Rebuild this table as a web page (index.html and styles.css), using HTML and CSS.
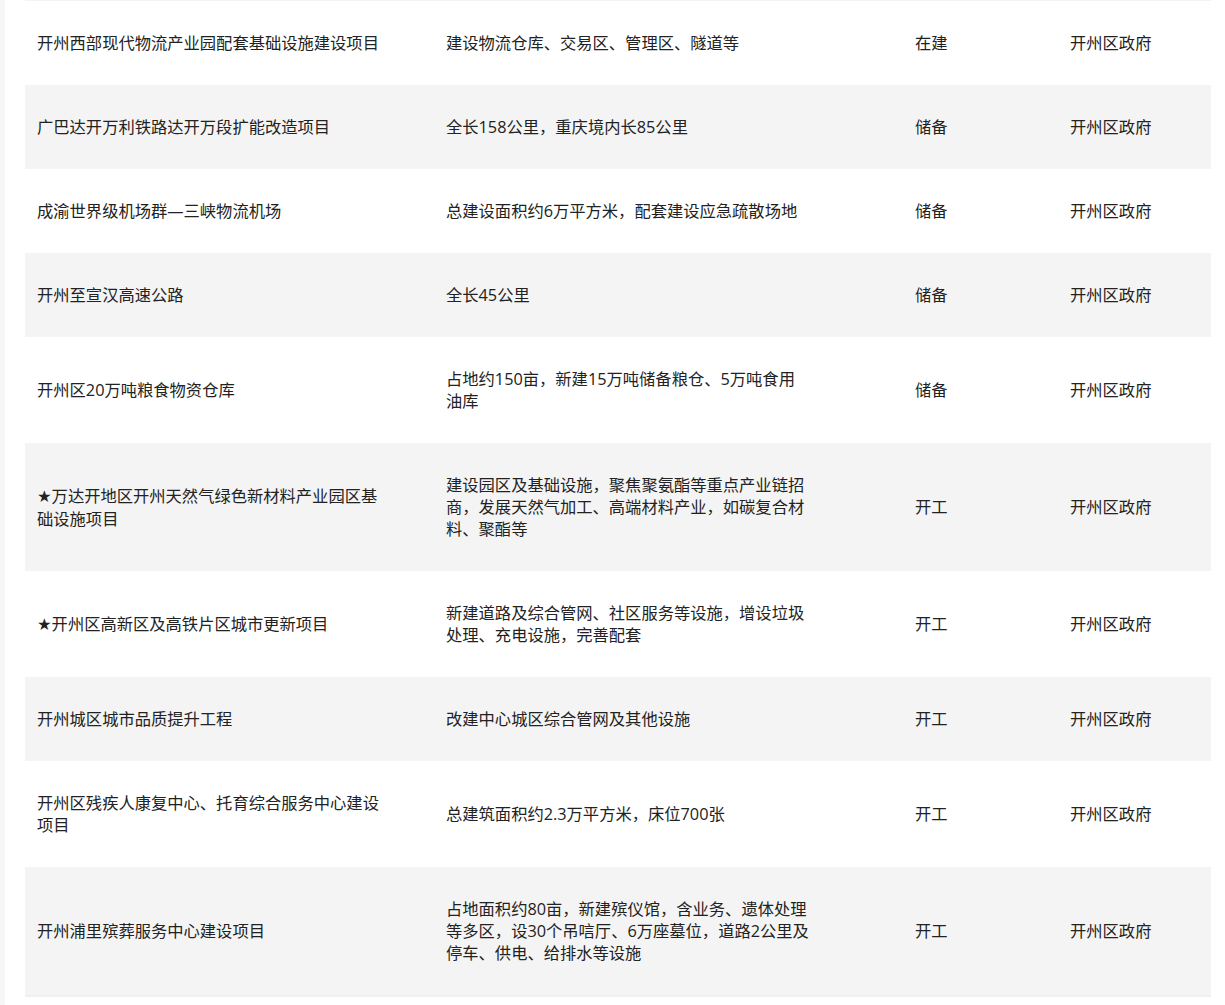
FILE: index.html
```html
<!DOCTYPE html>
<html lang="zh-CN">
<head>
<meta charset="utf-8">
<title>开州区项目</title>
<link rel="stylesheet" href="styles.css">
</head>
<body>
<div class="page">
  <table class="projects">
    <colgroup>
      <col class="c-name">
      <col class="c-desc">
      <col class="c-state">
      <col class="c-owner">
    </colgroup>
    <tbody>
      <tr>
        <td class="name">开州西部现代物流产业园配套基础设施建设项目</td>
        <td class="desc">建设物流仓库、交易区、管理区、隧道等</td>
        <td>在建</td>
        <td>开州区政府</td>
      </tr>
      <tr>
        <td class="name">广巴达开万利铁路达开万段扩能改造项目</td>
        <td class="desc">全长158公里，重庆境内长85公里</td>
        <td>储备</td>
        <td>开州区政府</td>
      </tr>
      <tr>
        <td class="name">成渝世界级机场群—三峡物流机场</td>
        <td class="desc">总建设面积约6万平方米，配套建设应急疏散场地</td>
        <td>储备</td>
        <td>开州区政府</td>
      </tr>
      <tr>
        <td class="name">开州至宣汉高速公路</td>
        <td class="desc">全长45公里</td>
        <td>储备</td>
        <td>开州区政府</td>
      </tr>
      <tr>
        <td class="name">开州区20万吨粮食物资仓库</td>
        <td class="desc">占地约150亩，新建15万吨储备粮仓、5万吨食用油库</td>
        <td>储备</td>
        <td>开州区政府</td>
      </tr>
      <tr>
        <td class="name"><span class="star">★</span>万达开地区开州天然气绿色新材料产业园区基础设施项目</td>
        <td class="desc">建设园区及基础设施，聚焦聚氨酯等重点产业链招商，发展天然气加工、高端材料产业，如碳复合材料、聚酯等</td>
        <td>开工</td>
        <td>开州区政府</td>
      </tr>
      <tr>
        <td class="name"><span class="star">★</span>开州区高新区及高铁片区城市更新项目</td>
        <td class="desc">新建道路及综合管网、社区服务等设施，增设垃圾处理、充电设施，完善配套</td>
        <td>开工</td>
        <td>开州区政府</td>
      </tr>
      <tr>
        <td class="name">开州城区城市品质提升工程</td>
        <td class="desc">改建中心城区综合管网及其他设施</td>
        <td>开工</td>
        <td>开州区政府</td>
      </tr>
      <tr>
        <td class="name">开州区残疾人康复中心、托育综合服务中心建设项目</td>
        <td class="desc">总建筑面积约2.3万平方米，床位700张</td>
        <td>开工</td>
        <td>开州区政府</td>
      </tr>
      <tr>
        <td class="name">开州浦里殡葬服务中心建设项目</td>
        <td class="desc">占地面积约80亩，新建殡仪馆，含业务、遗体处理等多区，设30个吊唁厅、6万座墓位，道路2公里及停车、供电、给排水等设施</td>
        <td>开工</td>
        <td>开州区政府</td>
      </tr>
    </tbody>
  </table>
</div>
</body>
</html>
```

FILE: styles.css
```css
html, body {
  margin: 0;
  padding: 0;
}

body {
  background: #f6f6f6;
  font-family: "Open Sans", "Noto Sans CJK SC", sans-serif;
  font-size: 16.3px;
  line-height: 22px;
  color: #222222;
}

.page {
  margin-left: 5px;
  background: #ffffff;
  min-height: 1005px;
  padding: 0 14px 0 20px;
}

.projects {
  width: 1186px;
  border-collapse: collapse;
  table-layout: fixed;
  border-top: 1px solid #f3f3f3;
}

.c-name { width: 409px; }
.c-desc { width: 469px; }
.c-state { width: 155px; }
.c-owner { width: 153px; }

.projects td {
  padding: 31px 12px;
  vertical-align: middle;
  text-align: left;
}

.projects td.name {
  padding-right: 52px;
}

.projects td.desc {
  padding-right: 93px;
}

.projects tr:nth-child(even) td {
  background: #f4f4f4;
}

.projects tr:last-child td {
  border-bottom: 2px solid #f0f0f0;
}

.star {
  font-family: "DejaVu Sans", sans-serif;
}
```
